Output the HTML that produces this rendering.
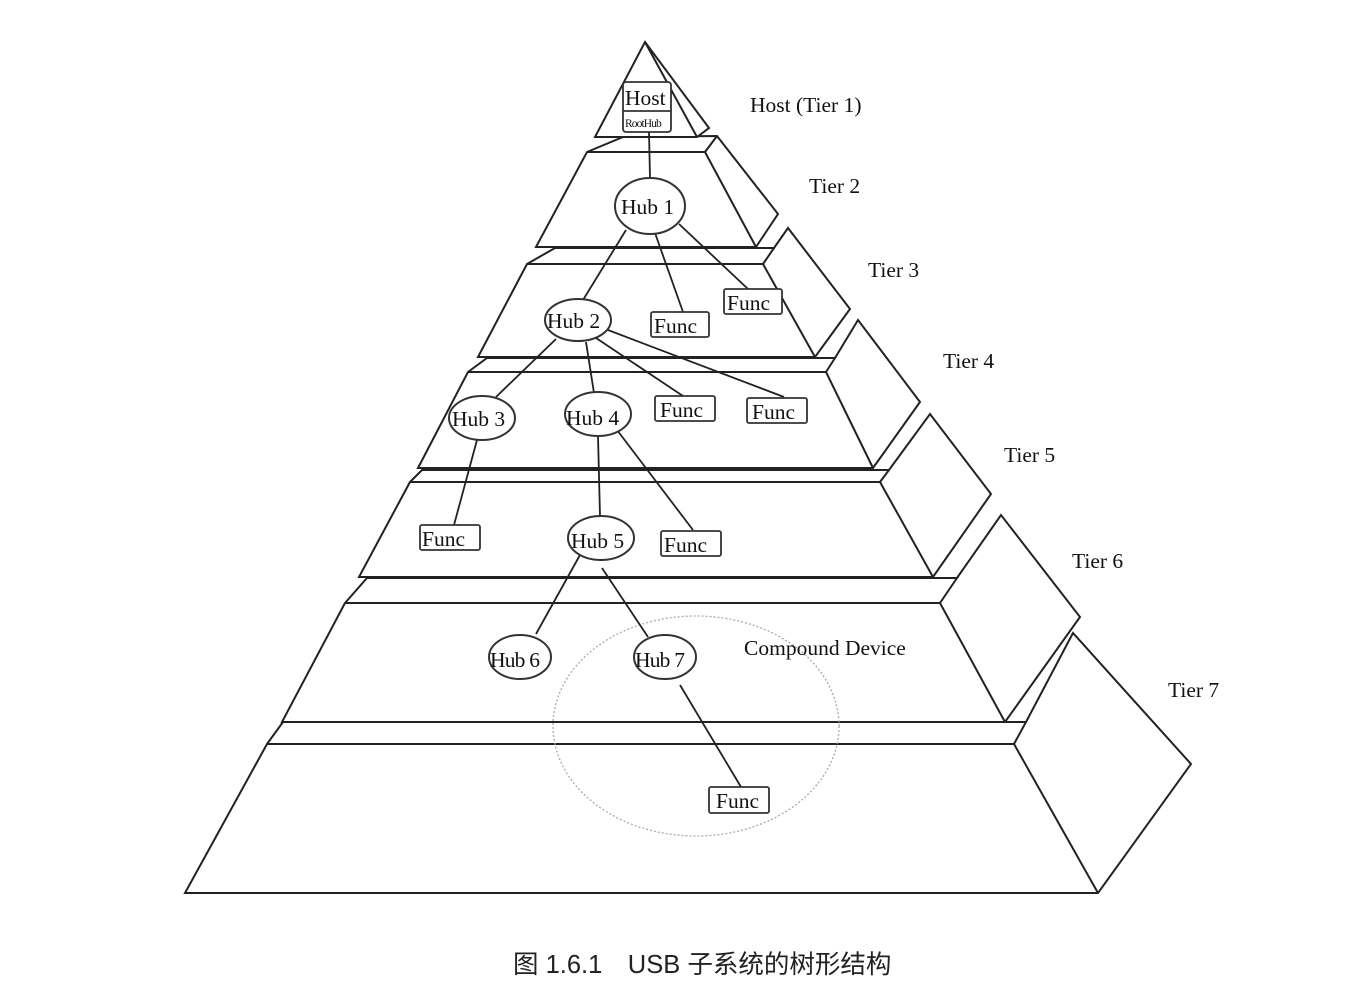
<!DOCTYPE html>
<html><head><meta charset="utf-8"><style>
html,body{margin:0;padding:0;background:#fff;}
svg{display:block;}
.t{font-family:"Liberation Serif",serif;font-size:21.5px;fill:#111;}
</style></head><body>
<svg width="1353" height="1003" viewBox="0 0 1353 1003" xmlns="http://www.w3.org/2000/svg">
<g fill="#fff" stroke="#222" stroke-width="2" stroke-linejoin="miter">
<!-- Tier 7 -->
<polygon points="267,744 283,722 1026,722 1073,633 1191,764 1098,893 185,893"/>
<polyline fill="none" points="267,744 1014,744 1098,893"/>
<polyline fill="none" points="1014,744 1026,722"/>
<!-- Tier 6 -->
<polygon points="345,603 367,578 957,578 1001,515 1080,617 1005,722 282,722"/>
<polyline fill="none" points="345,603 940,603 1005,722"/>
<polyline fill="none" points="940,603 957,578"/>
<!-- Tier 5 -->
<polygon points="410,482 422,470 889,470 930,414 991,494 933,577 359,577"/>
<polyline fill="none" points="410,482 880,482 933,577"/>
<polyline fill="none" points="880,482 889,470"/>
<!-- Tier 4 -->
<polygon points="468,372 487,358 835,358 858,320 920,402 873,468 418,468"/>
<polyline fill="none" points="468,372 826,372 873,468"/>
<polyline fill="none" points="826,372 835,358"/>
<!-- Tier 3 -->
<polygon points="527,264 555,248 774,248 788,228 850,309 815,357 478,357"/>
<polyline fill="none" points="527,264 763,264 815,357"/>
<polyline fill="none" points="763,264 774,248"/>
<!-- Tier 2 -->
<polygon points="587,152 623,137 717,136 778,214 756,247 536,247"/>
<polyline fill="none" points="587,152 705,152 756,247"/>
<polyline fill="none" points="705,152 717,136"/>
<!-- Tier 1 -->
<polygon points="645,42 709,128 697,137 595,137"/>
<polyline fill="none" points="645,42 697,137"/>
</g>
<ellipse cx="696" cy="726" rx="143" ry="110" fill="none" stroke="#aaa" stroke-width="1.3" stroke-dasharray="2,2"/>
<g stroke="#222" stroke-width="1.8" fill="none">
<line x1="649" y1="132" x2="650" y2="178"/>
<line x1="626" y1="230" x2="583" y2="300"/>
<line x1="655" y1="233" x2="683" y2="312"/>
<line x1="679" y1="224" x2="748" y2="289"/>
<line x1="556" y1="339" x2="496" y2="397"/>
<line x1="586" y1="342" x2="594" y2="393"/>
<line x1="596" y1="338" x2="683" y2="396"/>
<line x1="608" y1="330" x2="784" y2="397"/>
<line x1="477" y1="440" x2="454" y2="525"/>
<line x1="598" y1="436" x2="600" y2="516"/>
<line x1="617" y1="430" x2="693" y2="530"/>
<line x1="580" y1="555" x2="536" y2="634"/>
<line x1="602" y1="568" x2="648" y2="637"/>
<line x1="680" y1="685" x2="741" y2="787"/>
</g>
<g stroke="#333" stroke-width="1.8" fill="#fff">
<rect x="623" y="82" width="48" height="50" rx="3"/>
<line x1="623" y1="111" x2="671" y2="111"/>
</g>
<text class="t" x="625" y="105">Host</text>
<text class="t" x="625" y="127" style="font-size:11.5px;letter-spacing:-0.9px">RootHub</text>
<g stroke="#333" stroke-width="2" fill="#fff">
<ellipse cx="650" cy="206" rx="35" ry="28"/>
<ellipse cx="578" cy="320" rx="33" ry="21"/>
<ellipse cx="482" cy="418" rx="33" ry="22"/>
<ellipse cx="598" cy="414" rx="33" ry="22"/>
<ellipse cx="601" cy="538" rx="33" ry="22"/>
<ellipse cx="520" cy="657" rx="31" ry="22"/>
<ellipse cx="665" cy="657" rx="31" ry="22"/>
</g>
<text class="t" x="621" y="214">Hub 1</text>
<text class="t" x="547" y="328">Hub 2</text>
<text class="t" x="452" y="426">Hub 3</text>
<text class="t" x="566" y="425">Hub 4</text>
<text class="t" x="571" y="548">Hub 5</text>
<text class="t" x="490" y="667" style="letter-spacing:-0.8px">Hub 6</text>
<text class="t" x="635" y="667" style="letter-spacing:-0.8px">Hub 7</text>
<g stroke="#333" stroke-width="1.8" fill="#fff">
<rect x="651" y="312" width="58" height="25" rx="2"/>
<rect x="724" y="289" width="58" height="25" rx="2"/>
<rect x="655" y="396" width="60" height="25" rx="2"/>
<rect x="747" y="398" width="60" height="25" rx="2"/>
<rect x="420" y="525" width="60" height="25" rx="2"/>
<rect x="661" y="531" width="60" height="25" rx="2"/>
<rect x="709" y="787" width="60" height="26" rx="2"/>
</g>
<text class="t" x="654" y="333">Func</text>
<text class="t" x="727" y="310">Func</text>
<text class="t" x="660" y="417">Func</text>
<text class="t" x="752" y="419">Func</text>
<text class="t" x="422" y="546">Func</text>
<text class="t" x="664" y="552">Func</text>
<text class="t" x="716" y="808">Func</text>
<text class="t" x="744" y="655">Compound Device</text>
<text class="t" x="750" y="112">Host (Tier 1)</text>
<text class="t" x="809" y="193">Tier 2</text>
<text class="t" x="868" y="277">Tier 3</text>
<text class="t" x="943" y="368">Tier 4</text>
<text class="t" x="1004" y="462">Tier 5</text>
<text class="t" x="1072" y="568">Tier 6</text>
<text class="t" x="1168" y="697">Tier 7</text>
<text x="513" y="973" style="font-family:'Liberation Sans','Noto Sans CJK SC',sans-serif;font-size:25.5px;fill:#222">图 1.6.1　USB 子系统的树形结构</text>
</svg>
</body></html>
